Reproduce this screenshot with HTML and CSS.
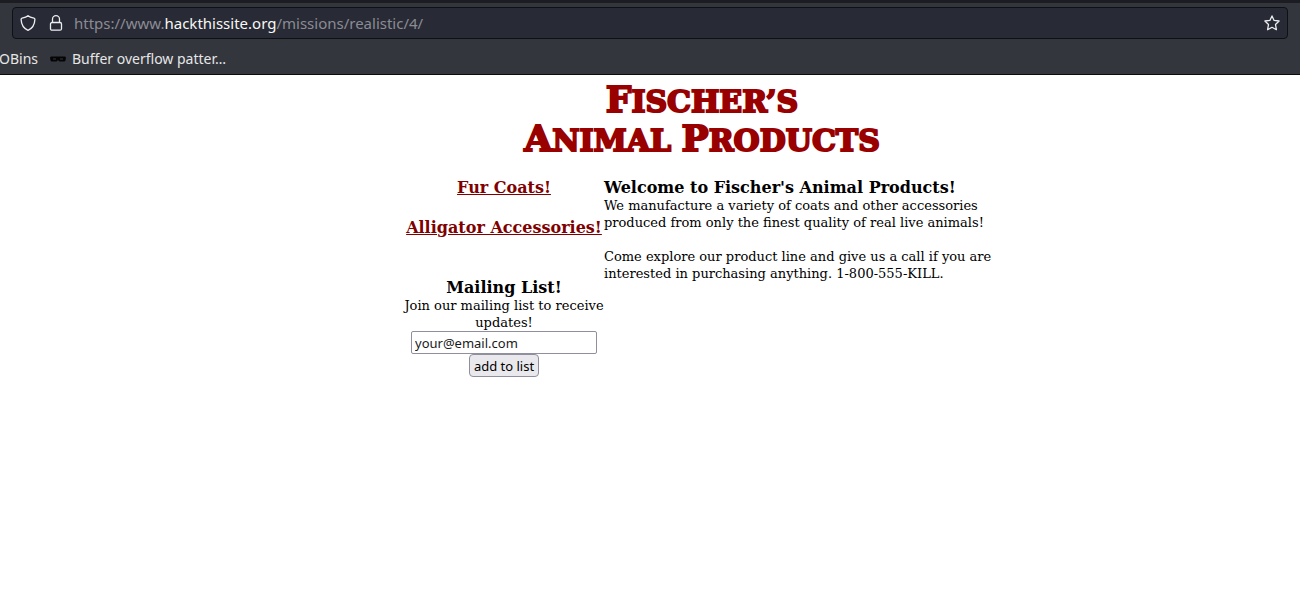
FILE: index.html
```html
<!DOCTYPE html>
<html lang="en">
<head>
<meta charset="utf-8">
<title>Fischer's Animal Products</title>
<link rel="stylesheet" href="styles.css">
</head>
<body>
<header class="chrome">
  <div class="urlbar">
    <div class="status">
      <svg class="icon" viewBox="0 0 16 16" aria-hidden="true"><path d="M8 .7C6.600 1.900 4 2.700 2.100 3.100 1.400 3.300 1 3.700 1.100 4.400 1.300 9.300 3.600 13.400 8 15.300c4.400-1.900 6.700-6 6.900-10.900.1-.7-.3-1.100-1-1.300C12 2.700 9.400 1.900 8 .7z"/></svg>
      <svg class="icon" viewBox="0 0 16 16" aria-hidden="true"><rect x="2.500" y="7.500" width="11" height="7.700" rx="1.500"/><path d="M4.500 7.500V4.200a3.500 3.500 0 0 1 7 0v3.300"/></svg>
    </div>
    <div class="address">https://www.<span class="domain">hackthissite.org</span>/missions/realistic/4/</div>
    <svg class="icon" viewBox="0 0 16 16" aria-hidden="true"><path d="M8 .9l2.100 4.500 5 .6-3.600 3.500.9 5.200L8 12.300l-4.400 2.400.9-5.200L.9 6l5-.6z"/></svg>
  </div>
  <nav class="bookmarks">
    <a class="bookmark" href="#">OBins</a>
    <a class="bookmark" href="#"><svg class="mask" viewBox="0 0 16 6" aria-hidden="true"><path class="mask-body" d="M1 .5h14l1 1-.5 3-1 1h-5L8.500 4.500h-1l-1 1h-5l-1-1L0 1.500z"/><path class="mask-eyes" d="M3 3h3M10 3h3"/></svg>Buffer overflow patter…</a>
  </nav>
</header>
<main class="page">
  <h1 class="logo"><span class="cap">F</span>ISCHER’S<br><span class="cap">A</span>NIMAL <span class="cap">P</span>RODUCTS</h1>
  <div class="columns">
    <aside class="side">
      <a class="product" href="#">Fur Coats!</a>
      <a class="product" href="#">Alligator Accessories!</a>
      <form class="mailing">
        <h2 class="title">Mailing List!</h2>
        <label for="email">Join our mailing list to receive updates!</label>
        <input class="email" id="email" type="text" value="your@email.com">
        <button class="add" type="button">add to list</button>
      </form>
    </aside>
    <section class="intro">
      <h2 class="title">Welcome to Fischer's Animal Products!</h2>
      <p>We manufacture a variety of coats and other accessories produced from only the finest quality of real live animals!</p>
      <p>Come explore our product line and give us a call if you are interested in purchasing anything. 1-800-555-KILL.</p>
    </section>
  </div>
</main>
</body>
</html>
```
FILE: styles.css
```css
* {
  box-sizing: border-box;
}

body {
  margin: 0;
  background: #fff;
  color: #000;
  font: 13px/17px "DejaVu Serif", serif;
}

.chrome {
  padding: 4px 12px;
  border-top: 3px solid #1c1d22;
  border-bottom: 1px solid #0c0c0d;
  background: #33363d;
  font: 15px/22px "Noto Sans", sans-serif;
}

.urlbar {
  display: flex;
  align-items: center;
  gap: 10px;
  height: 32px;
  padding: 0 7px;
  border: 1px solid #0f1014;
  border-radius: 4px;
  background: #282a36;
}

.status {
  display: flex;
  gap: 12px;
}

.icon {
  flex: none;
  width: 16px;
  height: 16px;
  fill: none;
  stroke: #ededf0;
  stroke-width: 1.3;
  stroke-linejoin: round;
}

.address {
  flex: 1;
  color: #8b8c93;
}

.domain {
  color: #f8f8f2;
}

.bookmarks {
  display: flex;
  gap: 12px;
  margin-top: 9px;
  margin-left: -13px;
  font-size: 14px;
}

.bookmark {
  display: flex;
  align-items: center;
  gap: 6px;
  color: #e6e6e6;
  text-decoration: none;
}

.mask {
  width: 16px;
  height: 6px;
}

.mask-body {
  fill: #050505;
}

.mask-eyes {
  stroke: #33363d;
}

.page {
  max-width: 708px;
  margin: 0 auto;
  padding-left: 108px;
}

.logo {
  margin: 0 0 18px;
  padding: 7px 4px 0 0;
  color: #900;
  font-size: 30px;
  line-height: 39px;
  text-align: center;
  -webkit-text-stroke: 2px #900;
}

.cap {
  font-size: 36px;
  line-height: 0;
}

.columns {
  display: flex;
}

.side {
  display: flex;
  flex: 0 0 200px;
  flex-direction: column;
  align-items: center;
  gap: 21px;
  text-align: center;
}

.product,
.title {
  margin: 0;
  font-size: 16px;
  font-weight: bold;
  line-height: 19px;
  white-space: nowrap;
}

.product {
  color: #800000;
}

.mailing {
  display: flex;
  flex-direction: column;
  align-items: center;
  margin-top: 20px;
}

.email {
  width: 186px;
  height: 23px;
  padding: 1px 3px;
  border: 1px solid #8f8f9d;
  border-radius: 2px;
  background: #fff;
  color: #1a1a1a;
  font: 13px "Noto Sans", sans-serif;
}

.add {
  height: 23px;
  padding: 0 4px;
  border: 1px solid #8f8f9d;
  border-radius: 4px;
  background: #e9e9ed;
  color: #000;
  font: 13px "Noto Sans", sans-serif;
}

.intro {
  flex: 1;
}

.intro p {
  margin: 0 0 17px;
}
```
